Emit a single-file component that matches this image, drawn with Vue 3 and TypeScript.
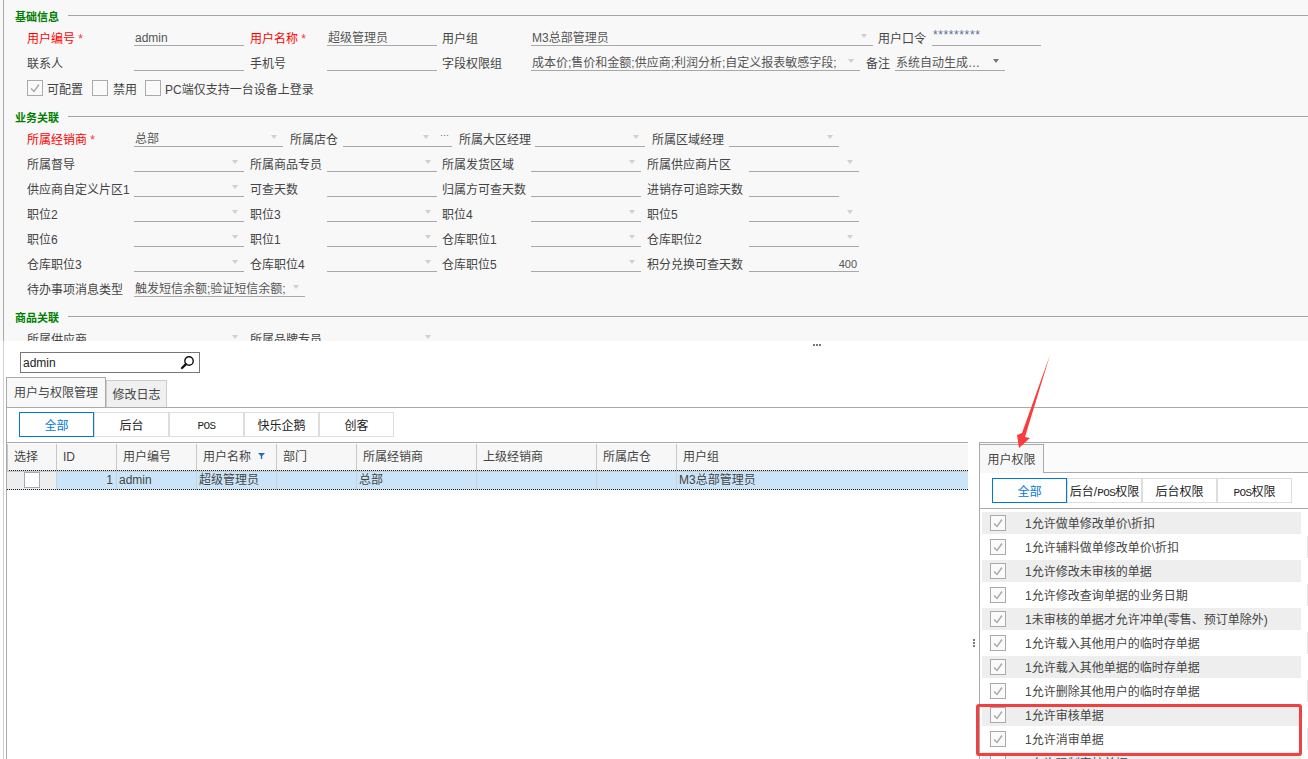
<script setup lang="ts">
interface Field {
  label: string
  lw: number
  w: number
  gap?: number
  value?: string
  req?: boolean
  arrow?: 'light' | 'dark'
  dots?: boolean
  right?: boolean
  pwd?: boolean
}

// Standard four-column row used by most of the 业务关联 block
function stdRow(labels: string[], lastWidth = 110, arrows = [true, true, true, true]): Field[] {
  const lw = [107, 77, 89, 102]
  const gaps = [6, 5, 6, 0]
  return labels.map((label, i) => ({
    label,
    lw: lw[i],
    w: i === 3 ? lastWidth : 110,
    gap: gaps[i],
    arrow: arrows[i] ? 'light' : undefined,
  }))
}

const basicRows: Field[][] = [
  [
    { label: '用户编号', lw: 107, w: 110, gap: 6, value: 'admin', req: true },
    { label: '用户名称', lw: 77, w: 110, gap: 5, value: '超级管理员', req: true },
    { label: '用户组', lw: 89, w: 342, gap: 5, value: 'M3总部管理员', arrow: 'light' },
    { label: '用户口令', lw: 54, w: 109, value: '*********', pwd: true },
  ],
  [
    { label: '联系人', lw: 107, w: 110, gap: 6 },
    { label: '手机号', lw: 77, w: 110, gap: 5 },
    {
      label: '字段权限组',
      lw: 89,
      w: 329,
      gap: 6,
      value: '成本价;售价和金额;供应商;利润分析;自定义报表敏感字段;',
      arrow: 'light',
    },
    { label: '备注', lw: 29, w: 110, value: '系统自动生成…', arrow: 'dark' },
  ],
]

const checks = [
  { label: '可配置', checked: true },
  { label: '禁用', checked: false },
  { label: 'PC端仅支持一台设备上登录', checked: false },
]

const positions7 = stdRow(['仓库职位3', '仓库职位4', '仓库职位5', '积分兑换可查天数'], 110, [
  true,
  true,
  true,
  false,
])
positions7[3].value = '400'
positions7[3].right = true

const bizRows: Field[][] = [
  [
    { label: '所属经销商', lw: 107, w: 149, gap: 7, value: '总部', req: true, arrow: 'light' },
    { label: '所属店仓', lw: 53, w: 109, gap: 7, arrow: 'light', dots: true },
    { label: '所属大区经理', lw: 76, w: 110, gap: 7, arrow: 'light' },
    { label: '所属区域经理', lw: 77, w: 110, arrow: 'light' },
  ],
  stdRow(['所属督导', '所属商品专员', '所属发货区域', '所属供应商片区']),
  stdRow(['供应商自定义片区1', '可查天数', '归属方可查天数', '进销存可追踪天数'], 90, [
    true,
    false,
    false,
    false,
  ]),
  stdRow(['职位2', '职位3', '职位4', '职位5']),
  stdRow(['职位6', '职位1', '仓库职位1', '仓库职位2']),
  positions7,
  [{ label: '待办事项消息类型', lw: 107, w: 171, value: '触发短信余额;验证短信余额;', arrow: 'light' }],
]

const goodsRows: Field[][] = [
  [
    { label: '所属供应商', lw: 107, w: 110, gap: 6, arrow: 'light' },
    { label: '所属品牌专员', lw: 77, w: 110, arrow: 'light' },
  ],
]

const scopes = ['全部', '后台', 'POS', '快乐企鹅', '创客']
const permScopes = ['全部', '后台/POS权限', '后台权限', 'POS权限']

// "POS" is drawn in a narrow typewriter face on the toolbar buttons
function scopeParts(text: string) {
  return text.split(/(POS)/).filter(Boolean)
}

const columns = [
  '选择',
  'ID',
  '用户编号',
  '用户名称',
  '部门',
  '所属经销商',
  '上级经销商',
  '所属店仓',
  '用户组',
]

const permissions = [
  '1允许做单修改单价\\折扣',
  '1允许辅料做单修改单价\\折扣',
  '1允许修改未审核的单据',
  '1允许修改查询单据的业务日期',
  '1未审核的单据才允许冲单(零售、预订单除外)',
  '1允许载入其他用户的临时存单据',
  '1允许载入其他单据的临时存单据',
  '1允许删除其他用户的临时存单据',
  '1允许审核单据',
  '1允许消审单据',
  '1允许强制审核单据',
]
</script>

<template>
  <div class="page">
    <section class="top">
      <div class="top-inner">
        <div class="section-head first"><span>基础信息</span><i></i></div>
        <div v-for="(row, r) in basicRows" :key="r" class="row">
          <template v-for="f in row" :key="f.label">
            <label class="lbl" :class="{ req: f.req }" :style="{ width: f.lw + 'px' }">
              {{ f.label }}<b v-if="f.req"> *</b>
            </label>
            <div
              class="inp"
              :class="{ pwd: f.pwd }"
              :style="{ width: f.w + 'px', marginRight: (f.gap || 0) + 'px' }"
            >
              <span class="val">{{ f.value }}</span>
              <em v-if="f.arrow" class="arrow" :class="f.arrow"></em>
            </div>
          </template>
        </div>
        <div class="check-row">
          <div v-for="c in checks" :key="c.label" class="check-item">
            <span class="cb">
              <svg v-if="c.checked" width="14" height="14" viewBox="0 0 14 14">
                <path d="M3 7.5 L6 10.5 L11 3.5" fill="none" stroke="#a8a8a8" stroke-width="1.4" />
              </svg>
            </span>
            <span>{{ c.label }}</span>
          </div>
        </div>

        <div class="section-head"><span>业务关联</span><i></i></div>
        <div v-for="(row, r) in bizRows" :key="r" class="row">
          <template v-for="f in row" :key="f.label">
            <label class="lbl" :class="{ req: f.req }" :style="{ width: f.lw + 'px' }">
              {{ f.label }}<b v-if="f.req"> *</b>
            </label>
            <div class="inp" :style="{ width: f.w + 'px', marginRight: (f.gap || 0) + 'px' }">
              <span class="val" :class="{ right: f.right }">{{ f.value }}</span>
              <em v-if="f.arrow" class="arrow" :class="[f.arrow, { shifted: f.dots }]"></em>
              <span v-if="f.dots" class="more">···</span>
            </div>
          </template>
        </div>

        <div class="section-head third"><span>商品关联</span><i></i></div>
        <div v-for="(row, r) in goodsRows" :key="r" class="row">
          <template v-for="f in row" :key="f.label">
            <label class="lbl" :style="{ width: f.lw + 'px' }">{{ f.label }}</label>
            <div class="inp" :style="{ width: f.w + 'px', marginRight: (f.gap || 0) + 'px' }">
              <em class="arrow light"></em>
            </div>
          </template>
        </div>
      </div>
    </section>

    <section class="bottom">
      <div class="search">
        <span>admin</span>
        <svg width="15" height="15" viewBox="0 0 15 15">
          <circle cx="9" cy="6" r="4.2" fill="none" stroke="#111" stroke-width="1.4" />
          <path d="M6 9.2 L2 13" stroke="#111" stroke-width="2.4" stroke-linecap="round" />
        </svg>
      </div>

      <div class="tabs">
        <div class="tab active">用户与权限管理</div>
        <div class="tab">修改日志</div>
      </div>

      <div class="pane">
        <div class="scope-row">
          <button v-for="(s, i) in scopes" :key="s" class="scope" :class="{ on: i === 0 }">
            <span
              v-for="part in scopeParts(s)"
              :key="part"
              :class="{ mono: part === 'POS' }"
              >{{ part }}</span
            >
          </button>
        </div>

        <div class="split">
          <div class="grid">
            <div class="grid-head">
              <div v-for="c in columns" :key="c" class="th">
                {{ c }}
                <svg v-if="c === '用户名称'" class="sort" width="7" height="6" viewBox="0 0 7 6">
                  <path d="M0 0 H7 L4.2 3 V6 H2.8 V3 Z" fill="#1f6fb5" />
                </svg>
              </div>
            </div>
            <div class="grid-row">
              <div class="td select"><span class="cb white"></span></div>
              <div class="td num">1</div>
              <div class="td">admin</div>
              <div class="td">超级管理员</div>
              <div class="td"></div>
              <div class="td">总部</div>
              <div class="td"></div>
              <div class="td"></div>
              <div class="td">M3总部管理员</div>
            </div>
          </div>

          <div class="splitter"><i></i><i></i><i></i></div>

          <div class="perm">
            <div class="perm-tabs"><div class="perm-tab">用户权限</div></div>
            <div class="perm-scopes">
              <button v-for="(s, i) in permScopes" :key="s" class="scope" :class="{ on: i === 0 }">
                <span
                  v-for="part in scopeParts(s)"
                  :key="part"
                  :class="{ mono: part === 'POS' }"
                  >{{ part }}</span
                >
              </button>
            </div>
            <ul class="perm-list">
              <li v-for="p in permissions" :key="p" class="perm-row">
                <span class="cb">
                  <svg width="14" height="14" viewBox="0 0 14 14">
                    <path d="M3 7.5 L6 10.5 L11 3.5" fill="none" stroke="#a8a8a8" stroke-width="1.4" />
                  </svg>
                </span>
                <span class="perm-text">{{ p }}</span>
              </li>
            </ul>
          </div>
        </div>
      </div>
    </section>

    <!-- splitter grip and the red annotations sit on top of everything -->
    <div class="grip"><i></i><i></i><i></i></div>
    <div class="mark-box"></div>
    <svg class="mark-arrow" width="1308" height="759" viewBox="0 0 1308 759">
      <polygon points="1050,355 1025,437 1030,438 1019,448 1017,435 1022,433" fill="#fa3c3c" />
    </svg>
  </div>
</template>

<style scoped>
.page {
  position: relative;
  width: 1308px;
  height: 759px;
  overflow: hidden;
  background: #fff;
  color: #444;
  font-family: 'Liberation Sans', 'Noto Sans CJK SC', sans-serif;
  font-size: 12px;
}

.top {
  height: 341px;
  overflow: hidden;
  background: #f8f8f8;
}

.top-inner {
  margin-left: 3px;
  height: 341px;
  border-left: 1px solid #aaa;
  box-sizing: border-box;
}

.section-head {
  display: flex;
  align-items: center;
  height: 12px;
  margin: 0 0 1px 11px;
  color: #008000;
  font-weight: 700;
  font-size: 11px;
  line-height: 12px;
}

.section-head.first {
  padding-top: 9px;
  margin-bottom: 0;
}

.section-head span {
  width: 53px;
  flex: none;
  margin-top: 3px;
}

.section-head i {
  flex: 1;
  height: 1px;
  background: #a4a4a4;
}

.section-head.third {
  margin-top: 13px;
  margin-bottom: 0;
}

.row {
  display: flex;
  align-items: flex-end;
  height: 22px;
  margin-top: 3px;
  padding-left: 23px;
}

.lbl {
  flex: none;
  line-height: 18px;
  margin-bottom: -2px;
  white-space: nowrap;
}

.lbl.req {
  color: #f00;
}

.lbl b {
  font-weight: 400;
  color: #f33;
}

.inp {
  position: relative;
  flex: none;
  height: 22px;
  box-sizing: border-box;
  border-bottom: 1px solid #a8a8a8;
  line-height: 17px;
  padding: 6px 0 0 1px;
  white-space: nowrap;
  color: #555;
}

.val {
  display: block;
  overflow: hidden;
}

.val.right {
  text-align: right;
  padding-right: 2px;
  font-size: 11px;
}

.pwd {
  padding-top: 2px;
}

.pwd .val {
  color: #5a6f9a;
  line-height: 18px;
  letter-spacing: 0.6px;
}

.arrow {
  position: absolute;
  right: 6px;
  top: 10px;
  width: 0;
  height: 0;
  border-left: 3px solid transparent;
  border-right: 3px solid transparent;
  border-top: 4px solid #d0d0d0;
}

.arrow.dark {
  border-top-color: #777;
}

.arrow.shifted {
  right: 23px;
}

.more {
  position: absolute;
  right: 3px;
  top: 2px;
  color: #666;
  font-size: 9px;
}

.check-row {
  display: flex;
  height: 16px;
  margin: 9px 0 14px;
  padding-left: 23px;
}

.check-item {
  display: flex;
  align-items: center;
  gap: 4px;
  margin-right: 9px;
  white-space: nowrap;
}

.check-item:nth-child(2) {
  gap: 5px;
  margin-right: 8px;
}

.cb {
  display: block;
  flex: none;
  width: 16px;
  height: 16px;
  box-sizing: border-box;
  border: 1px solid #aaa;
  background: #fafafa;
}

.cb svg {
  display: block;
  width: 14px;
  height: 14px;
}

.cb.white {
  background: #fff;
}

.bottom {
  position: relative;
  height: 418px;
  margin-left: 3px;
  border-left: 1px solid #d0d0d0;
  box-sizing: border-box;
}

.search {
  display: flex;
  align-items: center;
  justify-content: space-between;
  position: absolute;
  left: 16px;
  top: 11px;
  width: 180px;
  height: 21px;
  box-sizing: border-box;
  border: 1px solid #777;
  padding: 0 4px 0 2px;
  color: #222;
  background: #fff;
}

.tabs {
  display: flex;
  align-items: flex-end;
  padding: 37px 0 0 2px;
  height: 66px;
  box-sizing: border-box;
}

.tab {
  width: 61px;
  height: 27px;
  box-sizing: border-box;
  border: 1px solid #ccc;
  border-bottom: none;
  background: #f0f0f0;
  line-height: 29px;
  text-align: center;
}

.tab.active {
  width: 100px;
  height: 30px;
  background: #f8f8f8;
  border-color: #aaa;
  line-height: 31px;
}

.pane {
  height: 352px;
  box-sizing: border-box;
  border-top: 1px solid #aaa;
  margin-left: 2px;
  border-left: 1px solid #aaa;
}

.scope-row {
  display: flex;
  height: 34px;
  padding: 4px 0 0 12px;
  box-sizing: border-box;
}

.scope {
  width: 75px;
  height: 25px;
  box-sizing: border-box;
  border: 1px solid #ddd;
  background: #fff;
  color: #222;
  font: inherit;
  padding: 0;
  white-space: nowrap;
}

.scope.on {
  border-color: #0078d7;
  color: #0078d7;
}

.mono {
  font-family: 'Liberation Mono', monospace;
  font-size: 11px;
  letter-spacing: -0.6px;
}

.split {
  display: flex;
  height: 317px;
}

.grid {
  width: 961px;
  flex: none;
  border-top: 1px solid #aaa;
  padding-top: 1px;
  box-sizing: border-box;
}

.grid-head,
.grid-row {
  display: grid;
  grid-template-columns: 50px 60px 80px 80px 80px 120px 120px 80px 1fr;
}

.grid-head {
  height: 26px;
  background: #f7f7f7;
}

.th {
  position: relative;
  padding-left: 6px;
  line-height: 27px;
  border-right: 1px solid #c8c8c8;
  border-bottom: 1px solid #c8c8c8;
  white-space: nowrap;
}

.th:first-child {
  border-left: 1px solid #c8c8c8;
}

.th:last-child {
  border-right: none;
}

.sort {
  position: absolute;
  right: 11px;
  top: 9px;
}

.grid-row {
  height: 20px;
  box-sizing: border-box;
  background: #cce4f7;
  border-top: 1px dotted #222;
  border-bottom: 1px dotted #222;
}

.td {
  padding-left: 2px;
  line-height: 19px;
  border-right: 1px solid #c0d6e6;
  white-space: nowrap;
}

.td:last-child {
  border-right: none;
}

.td.select {
  display: flex;
  justify-content: center;
  align-items: center;
  padding: 0;
  background: #eee;
  height: 18px;
}

.td.num {
  text-align: right;
  padding-right: 3px;
}

.splitter {
  display: flex;
  flex-direction: column;
  align-items: center;
  gap: 1px;
  width: 11px;
  flex: none;
  padding-top: 197px;
  box-sizing: border-box;
}

.splitter i,
.grip i {
  display: block;
  width: 2px;
  height: 2px;
  background: #777;
}

.perm {
  flex: 1;
  min-width: 0;
  border-top: 1px solid #aaa;
  border-left: 1px solid #aaa;
}

.perm-tabs {
  height: 30px;
  padding-top: 1px;
  box-sizing: border-box;
  background: #fbfbfb;
  border-bottom: 1px solid #aaa;
}

.perm-tab {
  width: 64px;
  height: 29px;
  box-sizing: border-box;
  border: 1px solid #aaa;
  border-bottom: none;
  border-left: none;
  background: #f8f8f8;
  line-height: 31px;
  text-align: center;
}

.perm-scopes {
  display: flex;
  height: 36px;
  padding: 5px 0 0 12px;
  box-sizing: border-box;
  border-bottom: 1px solid #aaa;
}

.perm-list {
  list-style: none;
  margin: 0;
  padding: 3px 0 0 2px;
}

.perm-row {
  position: relative;
  display: flex;
  align-items: center;
  width: 319px;
  height: 22px;
  margin-bottom: 2px;
  padding-left: 8px;
  box-sizing: border-box;
}

.perm-row:nth-child(odd) {
  background: #eee;
}

.perm-row:nth-child(even)::after {
  content: '';
  position: absolute;
  left: 325px;
  top: 0;
  width: 1px;
  height: 22px;
  background: #e6e6e6;
}

.perm-text {
  margin: -2px 0 0 19px;
  white-space: nowrap;
}

.grip {
  position: absolute;
  left: 813px;
  top: 344px;
  display: flex;
  gap: 1px;
}

.mark-box {
  position: absolute;
  left: 976px;
  top: 704px;
  width: 326px;
  height: 52px;
  box-sizing: border-box;
  border: 3px solid #f04040;
  border-radius: 3px;
}

.mark-arrow {
  position: absolute;
  left: 0;
  top: 0;
  pointer-events: none;
}
</style>

<style>
html,
body {
  margin: 0;
  overflow: hidden;
}
</style>
